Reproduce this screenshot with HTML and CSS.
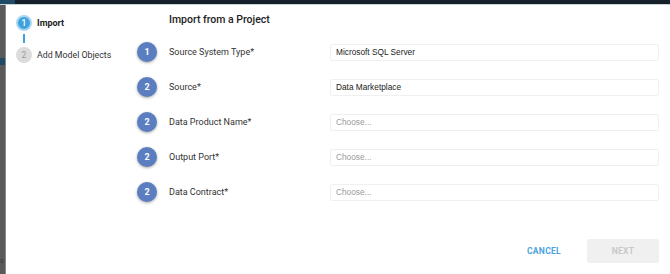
FILE: index.html
```html
<!DOCTYPE html>
<html lang="en">
<head>
<meta charset="utf-8">
<title>Import from a Project</title>
<link rel="stylesheet" href="styles.css">
</head>
<body>
<div class="app">
  <header class="topbar"><div class="topbar-accent"></div></header>
  <div class="main">
    <aside class="strip">
      <div class="strip-mark"></div>
      <span class="strip-text">s</span>
    </aside>
    <div class="panel">
      <nav class="steps">
        <div class="step step-active">
          <span class="step-dot">1</span>
          <span class="step-label">Import</span>
        </div>
        <div class="step-connector"></div>
        <div class="step step-todo">
          <span class="step-dot">2</span>
          <span class="step-label">Add Model Objects</span>
        </div>
      </nav>
      <section class="form">
        <h1 class="form-title">Import from a Project</h1>
        <div class="rows">
          <div class="row">
            <span class="badge">1</span>
            <span class="row-label">Source System Type*</span>
            <div class="field">Microsoft SQL Server</div>
          </div>
          <div class="row">
            <span class="badge">2</span>
            <span class="row-label">Source*</span>
            <div class="field">Data Marketplace</div>
          </div>
          <div class="row">
            <span class="badge">2</span>
            <span class="row-label">Data Product Name*</span>
            <div class="field field-empty">Choose...</div>
          </div>
          <div class="row">
            <span class="badge">2</span>
            <span class="row-label">Output Port*</span>
            <div class="field field-empty">Choose...</div>
          </div>
          <div class="row">
            <span class="badge">2</span>
            <span class="row-label">Data Contract*</span>
            <div class="field field-empty">Choose...</div>
          </div>
        </div>
        <div class="actions">
          <button class="btn-cancel" type="button">CANCEL</button>
          <button class="btn-next" type="button" disabled>NEXT</button>
        </div>
      </section>
    </div>
  </div>
</div>
</body>
</html>
```

FILE: styles.css
```css
* { box-sizing: border-box; }
html, body { margin: 0; padding: 0; }
body {
  width: 670px;
  height: 274px;
  overflow: hidden;
  background: #ffffff;
  font-family: Roboto, "Liberation Sans", sans-serif;
  color: #333;
}
.app {
  display: flex;
  flex-direction: column;
  height: 274px;
}
.topbar {
  height: 4px;
  background: #15202a;
  display: flex;
}
.topbar-accent {
  width: 15px;
  background: #1f4b66;
}
.main {
  flex: 1;
  display: flex;
  border-top: 1px solid #c9d2d6;
}
.strip {
  width: 6px;
  background: #595959;
  border-right: 1px solid #8a8a8a;
  display: flex;
  flex-direction: column;
  overflow: hidden;
}
.strip-mark {
  margin-top: 53px;
  height: 7px;
  background: #1d4a66;
}
.strip-text {
  margin-top: auto;
  margin-bottom: 9px;
  margin-left: 0;
  font-size: 7px;
  color: #3a3a3a;
  line-height: 8px;
}
.panel {
  flex: 1;
  display: flex;
  background: #fff;
}
.steps {
  width: 131px;
  padding: 10px 0 0 10px;
  display: flex;
  flex-direction: column;
}
.step {
  display: flex;
  align-items: center;
  gap: 5px;
  height: 16px;
}
.step-dot {
  width: 16px;
  height: 16px;
  border-radius: 50%;
  display: flex;
  align-items: center;
  justify-content: center;
  font-size: 8.5px;
  line-height: 1;
}
.step-active .step-dot {
  background: #3ea2dc;
  color: #fff;
  border: 2px solid #a9d6f1;
  font-weight: 500;
}
.step-active .step-label {
  font-weight: 700;
  font-size: 9px;
  color: #222;
}
.step-todo .step-dot {
  background: #dcdcdc;
  color: #9a9a9a;
}
.step-todo .step-label {
  font-size: 8.8px;
  color: #333;
}
.step-connector {
  width: 2px;
  height: 9px;
  margin: 3px 0 4px 7px;
  background: #3ea2dc;
}
.form {
  flex: 1;
  display: flex;
  flex-direction: column;
  padding: 8px 11px 0 0;
}
.form-title {
  margin: 0 0 0 32px;
  font-size: 10.5px;
  line-height: 14px;
  font-weight: 500;
  color: #222;
}
.rows {
  margin-top: 15px;
  display: flex;
  flex-direction: column;
  gap: 15px;
}
.row {
  display: grid;
  grid-template-columns: 20px 161px 1fr;
  column-gap: 12px;
  align-items: center;
  height: 20px;
}
.row .row-label { grid-column: 2; }
.badge {
  width: 20px;
  height: 20px;
  border-radius: 50%;
  background: #5b7ec0;
  color: #fff;
  font-size: 9px;
  font-weight: 700;
  display: flex;
  align-items: center;
  justify-content: center;
  box-shadow: 0 1px 3px rgba(0, 0, 0, 0.35);
}
.row-label {
  font-size: 9px;
  color: #333;
}
.field {
  margin-left: -12px;
  height: 17px;
  border: 1px solid #f0f0f0;
  border-radius: 2px;
  padding: 0 5px;
  display: flex;
  align-items: center;
  font-family: "Liberation Sans", Arial, sans-serif;
  font-size: 8.3px;
  color: #222;
}
.field-empty { color: #9a9a9a; }
.actions {
  margin-top: 37px;
  display: flex;
  justify-content: flex-end;
  align-items: center;
  gap: 26px;
}
.btn-cancel, .btn-next {
  font-family: Roboto, "Liberation Sans", sans-serif;
  font-size: 8.5px;
  font-weight: 700;
  letter-spacing: 0.3px;
  border: none;
  padding: 0;
  cursor: pointer;
}
.btn-cancel {
  background: transparent;
  color: #4aa3df;
}
.btn-next {
  width: 72px;
  height: 24px;
  border-radius: 2px;
  background: #f0f0f0;
  color: #c8c8c8;
}
```
